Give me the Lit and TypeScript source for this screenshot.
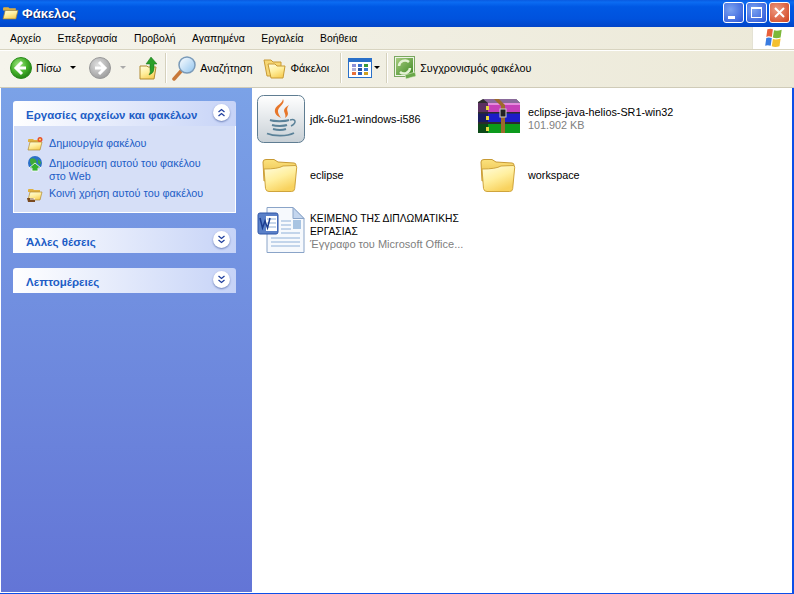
import { LitElement, html, css, svg } from 'lit';
import { customElement } from 'lit/decorators.js';

const sharedDefs = svg`
  <defs>
    <linearGradient id="fold" x1="0" y1="0" x2="0.5" y2="1">
      <stop offset="0" stop-color="#fffde0" />
      <stop offset="0.55" stop-color="#ffef9e" />
      <stop offset="1" stop-color="#f8d25e" />
    </linearGradient>
    <linearGradient id="foldback" x1="0" y1="0" x2="0" y2="1">
      <stop offset="0" stop-color="#fbe27e" />
      <stop offset="1" stop-color="#e8b63c" />
    </linearGradient>
    <linearGradient id="lens" x1="0" y1="0" x2="1" y2="1">
      <stop offset="0" stop-color="#ffffff" />
      <stop offset="1" stop-color="#8fc3ee" />
    </linearGradient>
    <radialGradient id="back" cx="0.4" cy="0.35" r="0.7">
      <stop offset="0" stop-color="#a6e88a" />
      <stop offset="0.55" stop-color="#47b22c" />
      <stop offset="1" stop-color="#1d7a12" />
    </radialGradient>
    <radialGradient id="fwd" cx="0.4" cy="0.35" r="0.7">
      <stop offset="0" stop-color="#e0e0e0" />
      <stop offset="1" stop-color="#9a9a9a" />
    </radialGradient>
    <linearGradient id="java" x1="0" y1="0" x2="0" y2="1">
      <stop offset="0" stop-color="#ffffff" />
      <stop offset="1" stop-color="#c8d0d6" />
    </linearGradient>
    <linearGradient id="sync" x1="0" y1="0" x2="1" y2="1">
      <stop offset="0" stop-color="#a8cc80" />
      <stop offset="1" stop-color="#3f8a24" />
    </linearGradient>
  </defs>
`;

const bigFolder = html`<svg class="ic48" viewBox="0 0 48 48">
  <path d="M6 11q0-2.500 3-2.500h8l4 2.500 16 1q2 .2 2 2v3L7 30z" fill="url(#foldback)" stroke="#c89a34" />
  <path d="M7 18q14 0 19-3l12-.5q2 0 1.700 2l-2 21q-.2 3-3 3H12q-3 0-3.500-3z" fill="url(#fold)" stroke="#cfa43c" />
</svg>`;

const javaIcon = html`<svg class="ic48" viewBox="0 0 48 48">
  <rect x="0.5" y="0.5" width="47" height="47" rx="6" fill="url(#java)" stroke="#5f7d92" />
  <path d="M26 4c3 5-6 8-5 13 .4 2 1.500 4 3 6-3.500-1.500-7-4.500-6-8.500 1-4 7.500-6 8-10.500z" fill="#e7762a" />
  <path d="M32 10c-3 2-6 4-4.500 7.500.6 1.500 1.500 3 .5 5.500 3-2 3.500-4 2.500-6.500-.7-1.800-.5-4 1.500-6.500z" fill="#e7762a" />
  <path d="M13 25c4 1.500 15 1.500 19 0M15 30c4 1.200 12 1.200 15 0M16 34c4 1 10 1 13 0" fill="none" stroke="#5b8299" stroke-width="2" />
  <path d="M10 38.500c7 3 20 3 27-.5" fill="none" stroke="#5b8299" stroke-width="1.800" />
  <path d="M33 25c6-2 7 3 1 6" fill="none" stroke="#5b8299" stroke-width="1.500" />
</svg>`;

const rarIcon = html`<svg class="ic48" viewBox="0 0 48 48">
  <path d="M3 7l5-3h33l4 4v30H8l-5-1z" fill="#2c2c2c" />
  <path d="M8 4h33l4 4H13z" fill="#8a6a9a" />
  <rect x="13" y="8" width="32" height="9" fill="#c640b8" />
  <rect x="13" y="8" width="32" height="2" fill="#e48adc" />
  <rect x="13" y="18.500" width="32" height="8.500" fill="#1c1cc8" />
  <rect x="13" y="29" width="32" height="9" fill="#0c9a1c" />
  <rect x="3" y="8" width="10" height="9" fill="#5a3060" />
  <rect x="3" y="18.500" width="10" height="8.500" fill="#1a1c60" />
  <rect x="3" y="29" width="10" height="9" fill="#0c4a18" />
  <rect x="11" y="11" width="3" height="4" fill="#e8d840" />
  <rect x="11" y="21" width="3" height="4" fill="#e8d840" />
  <rect x="11" y="32" width="3" height="4" fill="#e8d840" />
  <path d="M19 4h5l6 6v28h-4V11z" fill="#9c6a2c" />
  <rect x="25" y="14" width="6" height="8" fill="#222" stroke="#ccc" />
</svg>`;

const wordIcon = html`<svg class="ic48" viewBox="0 0 48 48">
  <path d="M10 .5h26l11 11v34H10z" fill="#f6f9fd" stroke="#8aa4c8" />
  <path d="M36 .5v11h11z" fill="#c4d6ee" stroke="#8aa4c8" />
  <path d="M14 31h29M14 35h29M14 39h29M24 14h10M24 18h10M24 22h10M24 26h19" stroke="#8fb0d8" />
  <rect x="36" y="13" width="8" height="9" fill="#a8c4e2" />
  <rect x="1" y="6" width="20" height="21" rx="2" fill="#5a80c8" stroke="#2f56a8" />
  <rect x="9" y="9" width="11" height="15" fill="#fff" />
  <path d="M10 12h9M10 16h9M10 20h9" stroke="#8fb0d8" />
  <path d="M3 11l2.500 10 2.500-7 2.500 7 2.500-10" fill="none" stroke="#1c3c90" stroke-width="1.500" />
</svg>`;

const smallFolder = (extra = svg``) => html`<svg class="ic16" viewBox="0 0 16 16">
  <path d="M1 4q0-1 1-1h4l1 1h6v2H1z" fill="#e0b040" />
  <path d="M1 14l2-8h12l-2 8z" fill="url(#fold)" stroke="#b08a30" stroke-width=".7" />
  ${extra}
</svg>`;

const sideIcons = [
  smallFolder(svg`<circle cx="13" cy="3.500" r="2.500" fill="#e8502a" /><circle cx="13" cy="3.500" r="1" fill="#ffe070" />`),
  html`<svg class="ic16" viewBox="0 0 16 16">
    <circle cx="8" cy="7" r="7" fill="#2a70c8" />
    <path d="M3 3q4-2 6 1t-2 5-4-6zM11 3l3 3-1 3-2-2z" fill="#3ea83a" />
    <path d="M8 7l6 5h-3v3H5v-3H2z" fill="#36b030" stroke="#fff" stroke-width=".8" />
  </svg>`,
  smallFolder(svg`<path d="M0 12h6l2 2v2H1z" fill="#7a4a20" /><path d="M3 13h5" stroke="#fff" />`),
];

const chevron = (up: boolean) => html`<span class="chev">
  <svg viewBox="0 0 9 9" width="9" height="9">
    <path d=${up ? 'M1.500 4l3-2.500L7.500 4M1.500 8l3-2.500L7.500 8' : 'M1.500 1l3 2.500L7.500 1M1.500 5l3 2.500L7.500 5'}
      fill="none" stroke="#21409f" stroke-width="1.300" />
  </svg>
</span>`;

const menus = ['Αρχείο', 'Επεξεργασία', 'Προβολή', 'Αγαπημένα', 'Εργαλεία', 'Βοήθεια'];

@customElement('app-root')
export class AppRoot extends LitElement {
  static styles = css`
    :host {
      display: flex;
      flex-direction: column;
      width: 794px;
      height: 594px;
      overflow: hidden;
      font-family: 'Liberation Sans', sans-serif;
      font-size: 10.800px;
      color: #000;
      background: #fff;
    }
    .title {
      flex: none;
      height: 27px;
      display: flex;
      align-items: center;
      padding: 0 4px 2px 2px;
      box-sizing: border-box;
      background: linear-gradient(#0a5ae0 0, #0b6cf2 8%, #0058e4 25%, #0052dd 70%, #0245c8 100%);
      color: #fff;
      font-size: 13px;
      font-weight: 700;
      text-shadow: 1px 1px 1px #0f1f66;
    }
    .title-text {
      flex: 1;
      margin: 2px 0 0 3px;
    }
    .title .ic16 {
      width: 17px;
      height: 17px;
    }
    .winbtn {
      width: 21px;
      height: 21px;
      box-sizing: border-box;
      margin-left: 2px;
      border: 1px solid #fff;
      border-radius: 3px;
      background: radial-gradient(circle at 35% 35%, #7ba2f0, #2a55d8);
    }
    .winbtn.close {
      background: radial-gradient(circle at 35% 35%, #ee9a80, #d0401c);
    }
    .winbtn svg {
      display: block;
    }
    .menu {
      flex: none;
      height: 23px;
      display: flex;
      box-sizing: border-box;
      border-bottom: 1px solid #d8d4c0;
      background: linear-gradient(90deg, #f5f4ec, #ece9d8);
    }
    .menu-items {
      flex: 1;
      display: flex;
      align-items: center;
      gap: 16.500px;
      padding-left: 10px;
      font-size: 10.400px;
    }
    .logo {
      width: 41px;
      background: #fff;
      display: flex;
      align-items: center;
      justify-content: center;
      border-left: 1px solid #e4e2d4;
    }
    .toolbar {
      flex: none;
      height: 38px;
      display: flex;
      align-items: center;
      box-sizing: border-box;
      padding: 0 0 3px 10px;
      border-top: 1px solid #fff;
      border-bottom: 1px solid #cfcbb8;
      background: linear-gradient(90deg, #f5f4ec, #ece9d8);
    }
    .tool {
      display: flex;
      align-items: center;
    }
    .sep {
      width: 1px;
      height: 30px;
      background: #d5d1bd;
      box-shadow: 1px 0 0 #fff;
    }
    .arrow {
      width: 0;
      height: 0;
      border: 3px solid transparent;
      border-top: 3px solid #000;
      border-bottom: 0;
    }
    .arrow.off {
      border-top-color: #aaa;
    }
    .main {
      flex: 1;
      min-height: 0;
      display: flex;
      box-sizing: border-box;
      padding: 0 0 1px 1px;
      border-bottom: 1px solid #0c4fe8;
      border-right: 2px solid #0c4fe8;
    }
    .side {
      flex: none;
      width: 251px;
      box-sizing: border-box;
      padding: 13px 16px 0 12px;
      display: flex;
      flex-direction: column;
      gap: 15px;
      background: linear-gradient(#7ba2e7, #6375d6);
    }
    .panel-head {
      height: 25px;
      display: flex;
      align-items: center;
      justify-content: space-between;
      box-sizing: border-box;
      padding: 2px 6px 0 13px;
      border-radius: 3px 3px 0 0;
      background: linear-gradient(90deg, #fff, #c6d3f7);
      color: #215dc6;
      font-weight: 700;
      font-size: 11.500px;
    }
    .chev {
      width: 17px;
      height: 17px;
      margin-bottom: 5px;
      border-radius: 50%;
      background: #fff;
      box-shadow: 0 1px 2px #6b7fb8;
      display: flex;
      align-items: center;
      justify-content: center;
    }
    .panel-body {
      height: 87px;
      box-sizing: border-box;
      padding: 11px 20px 0 13px;
      border: 1px solid #fff;
      border-top: 0;
      background: #d6dff7;
      color: #215dc6;
      display: flex;
      flex-direction: column;
      gap: 4px;
    }
    .task {
      display: flex;
      gap: 6px;
      line-height: 13px;
      min-height: 13px;
    }
    .task .ic16 {
      flex: none;
      margin: -1px 0 1px;
    }
    .files {
      flex: 1;
      display: grid;
      grid-template-columns: 218px 221px;
      grid-auto-rows: 56px;
      align-content: start;
      padding: 3px 0 0 5px;
    }
    .tile {
      display: flex;
      align-items: center;
      gap: 5px;
      line-height: 13px;
    }
    .tile .label {
      width: 160px;
    }
    .tile .caps {
      font-size: 10.300px;
    }
    .gray {
      color: #808080;
      white-space: nowrap;
    }
    .caps .gray {
      font-size: 11px;
    }
    .ic48 {
      width: 48px;
      height: 48px;
      flex: none;
    }
    .ic16 {
      width: 16px;
      height: 16px;
    }
  `;

  render() {
    return html`
      <svg width="0" height="0" style="position:absolute">${sharedDefs}</svg>
      <div class="title">
        ${smallFolder()}
        <span class="title-text">Φάκελος</span>
        <span class="winbtn">
          <svg viewBox="0 0 19 19" width="19" height="19"><rect x="4" y="13" width="7" height="3" fill="#fff" /></svg>
        </span>
        <span class="winbtn">
          <svg viewBox="0 0 19 19" width="19" height="19">
            <rect x="4.500" y="4.500" width="10" height="10" fill="none" stroke="#fff" />
            <rect x="4" y="4" width="11" height="2" fill="#fff" />
          </svg>
        </span>
        <span class="winbtn close">
          <svg viewBox="0 0 19 19" width="19" height="19">
            <path d="M5 5l9 9M14 5l-9 9" stroke="#fff" stroke-width="2" />
          </svg>
        </span>
      </div>
      <div class="menu">
        <div class="menu-items">${menus.map((m) => html`<span>${m}</span>`)}</div>
        <div class="logo">
          <svg viewBox="0 0 20 20" width="22" height="22">
            <path d="M4 2q3-1 5 0l-1 7q-3-1-5 0z" fill="#e8603a" />
            <path d="M10 3q3 1 7-.500l-1 7q-4 1.500-7 0z" fill="#7cb83a" />
            <path d="M3 10q2-1 5 0l-1 7q-3-1-5 0z" fill="#3a7ce0" />
            <path d="M9 11q3 1 7-.500l-1 7q-4 1.500-7 0z" fill="#f4c030" />
          </svg>
        </div>
      </div>
      <div class="toolbar">
        <div class="tool">
          <svg viewBox="0 0 22 22" width="22" height="22">
            <circle cx="11" cy="11" r="10.500" fill="url(#back)" stroke="#2a8a1c" />
            <path d="M12 5l-6 6 6 6M6 11h10" fill="none" stroke="#fff" stroke-width="3" />
          </svg>
          <span style="margin-left:4px">Πίσω</span>
          <span class="arrow" style="margin-left:9px;margin-right:13px"></span>
        </div>
        <div class="tool">
          <svg viewBox="0 0 22 22" width="22" height="22">
            <circle cx="11" cy="11" r="10.500" fill="url(#fwd)" stroke="#999" />
            <path d="M10 5l6 6-6 6M16 11H6" fill="none" stroke="#fff" stroke-width="3" />
          </svg>
          <span class="arrow off" style="margin:0 13px 0 9px"></span>
        </div>
        <svg viewBox="0 0 20 24" width="20" height="24">
          <path d="M1 10h7l1 1h8l-2 12H1z" fill="url(#fold)" stroke="#b08a30" />
          <path d="M12 1l6 7h-3v5q0 4-5 6 2-3 1-6V8H7z" fill="#2aa02a" stroke="#1a701a" stroke-width=".5" />
        </svg>
        <span class="sep" style="margin-left:6px"></span>
        <div class="tool" style="gap:3px;margin-left:5px">
          <svg viewBox="0 0 26 26" width="26" height="26">
            <path d="M3 24l8-9" stroke="#c8793a" stroke-width="3.500" stroke-linecap="round" />
            <circle cx="16" cy="10" r="8" fill="url(#lens)" stroke="#7a9ab8" stroke-width="1.500" />
          </svg>
          <span>Αναζήτηση</span>
        </div>
        <div class="tool" style="gap:3px;margin-left:11px">
          <svg viewBox="0 0 24 22" width="24" height="22">
            <path d="M1 3h7l2 2h8v14H4z" fill="#f7d774" stroke="#c89a34" />
            <path d="M5 7h7l2 2h8l-2 12H8z" fill="url(#fold)" stroke="#c89a34" />
          </svg>
          <span>Φάκελοι</span>
        </div>
        <span class="sep" style="margin-left:11px"></span>
        <div class="tool" style="gap:2px;margin-left:7px">
          <svg viewBox="0 0 24 20" width="24" height="20">
            <rect x=".5" y=".5" width="23" height="19" fill="#fff" stroke="#2a70c8" />
            <rect x="1" y="1" width="22" height="3" fill="#2a70c8" />
            <rect x="4" y="6" width="4" height="3" fill="#8a90d8" />
            <rect x="10" y="6" width="4" height="3" fill="#3a70d0" />
            <rect x="16" y="6" width="4" height="3" fill="#3a9a3a" />
            <rect x="4" y="10" width="4" height="3" fill="#b0b0d8" />
            <rect x="10" y="10" width="4" height="3" fill="#2a50a0" />
            <rect x="16" y="10" width="4" height="3" fill="#3a7ad0" />
            <rect x="4" y="14" width="4" height="3" fill="#e8703a" />
            <rect x="10" y="14" width="4" height="3" fill="#2a60c0" />
            <rect x="16" y="14" width="4" height="3" fill="#d0a020" />
          </svg>
          <span class="arrow"></span>
        </div>
        <span class="sep" style="margin-left:6px"></span>
        <div class="tool" style="gap:3px;margin-left:6px">
          <svg viewBox="0 0 24 26" width="24" height="26">
            <rect x="1.500" y="1.500" width="20" height="20" fill="#eef3e6" stroke="#7aa860" />
            <rect x="3" y="3" width="17" height="17" fill="url(#sync)" />
            <path d="M6 11a6 6 0 0 1 10-4M17 13a6 6 0 0 1-10 4" fill="none" stroke="#e4f2d4" stroke-width="2.500" />
            <path d="M13 24l10-3-1-4-10 3z" fill="#6aa84a" stroke="#e4f2d4" stroke-width=".6" />
          </svg>
          <span>Συγχρονισμός φακέλου</span>
        </div>
      </div>
      <div class="main">
        <div class="side">
          <div>
            <div class="panel-head">Εργασίες αρχείων και φακέλων ${chevron(true)}</div>
            <div class="panel-body">
              <div class="task">${sideIcons[0]}<span>Δημιουργία φακέλου</span></div>
              <div class="task">${sideIcons[1]}<span>Δημοσίευση αυτού του φακέλου στο Web</span></div>
              <div class="task">${sideIcons[2]}<span>Κοινή χρήση αυτού του φακέλου</span></div>
            </div>
          </div>
          <div class="panel-head">Άλλες θέσεις ${chevron(false)}</div>
          <div class="panel-head">Λεπτομέρειες ${chevron(false)}</div>
        </div>
        <div class="files">
          <div class="tile">${javaIcon}<div class="label">jdk-6u21-windows-i586</div></div>
          <div class="tile">
            ${rarIcon}
            <div class="label">eclipse-java-helios-SR1-win32<div class="gray">101.902 KB</div></div>
          </div>
          <div class="tile">${bigFolder}<div class="label">eclipse</div></div>
          <div class="tile">${bigFolder}<div class="label">workspace</div></div>
          <div class="tile">
            ${wordIcon}
            <div class="label caps">
              ΚΕΙΜΕΝΟ ΤΗΣ ΔΙΠΛΩΜΑΤΙΚΗΣ ΕΡΓΑΣΙΑΣ
              <div class="gray">Έγγραφο του Microsoft Office...</div>
            </div>
          </div>
        </div>
      </div>
    `;
  }
}
